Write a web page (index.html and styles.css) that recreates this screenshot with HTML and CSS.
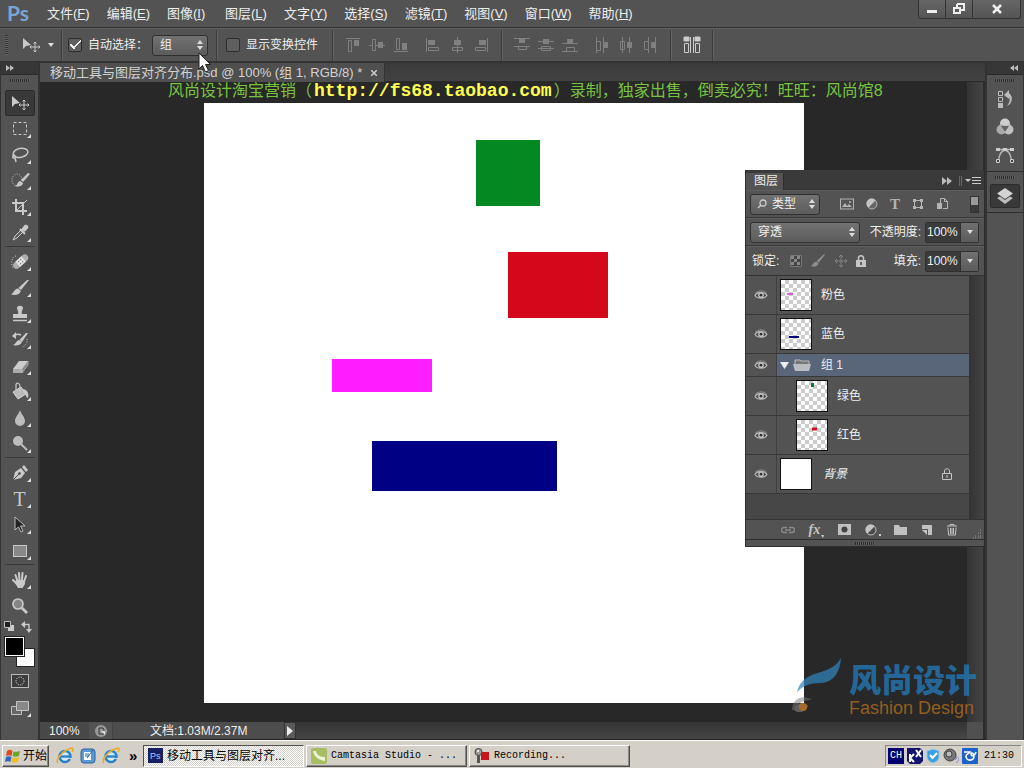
FILE: index.html
```html
<!DOCTYPE html>
<html lang="zh-CN">
<head>
<meta charset="utf-8">
<title>Photoshop</title>
<link rel="stylesheet" href="styles.css">
</head>
<body>
<svg class="sprite" aria-hidden="true">
  <symbol id="eye" viewBox="0 0 14 12"><path d="M1 6.500C3 2.500 11 2.500 13 6.500C11 10 3 10 1 6.500Z" fill="#484848" stroke="#b4b4b4" stroke-width="1.300"/><circle cx="7" cy="6.200" r="2.800" fill="#c4c4c4"/><circle cx="7" cy="6.200" r="1.400" fill="#333"/><path d="M1 4.500C4 1 10 1 13 4.500" fill="none" stroke="#8d8d8d"/></symbol>
  <symbol id="updown" viewBox="0 0 6 10"><path d="M0 4L3 0L6 4ZM0 6H6L3 10Z" fill="#ddd"/></symbol>
  <symbol id="down" viewBox="0 0 6 4"><path d="M0 0H6L3 4Z" fill="#ddd"/></symbol>
  <symbol id="move" viewBox="0 0 18 16"><path d="M1 1V12L4 9L9 8Z" fill="#c9c9c9"/><path d="M13 5V15M8 10H18M11.500 6.500L13 5L14.500 6.500M11.500 13.500L13 15L14.500 13.500M9.500 8.500L8 10L9.500 11.500M16.500 8.500L18 10L16.500 11.500" fill="none" stroke="#c9c9c9"/></symbol>
  <symbol id="brush" viewBox="0 0 20 20"><path d="M19 2L11 12L8.500 10L17 2Z" fill="#c9c9c9"/><path d="M8 10.500L10.800 12.800C10 17 5 17.500 1 16.500C4 15 4 11 8 10.500Z" fill="#c9c9c9"/></symbol>
  <symbol id="ie" viewBox="0 0 18 18"><circle cx="9" cy="9.500" r="5.500" fill="#d8ecf8" stroke="#2a83cf" stroke-width="2.600"/><path d="M4 9.500H15" stroke="#2a83cf" stroke-width="2.400"/><path d="M11 11H16V13Z" fill="#d4d0c8"/><path d="M2 16C-1 14 5 5 13 2C17 0 18 2 16 5" fill="none" stroke="#e8ae2c" stroke-width="1.700"/></symbol>
</svg>

<header class="menubar">
  <div class="brand">Ps</div>
  <nav class="menus">
    <button>文件(<u>F</u>)</button><button>编辑(<u>E</u>)</button><button>图像(<u>I</u>)</button><button>图层(<u>L</u>)</button><button>文字(<u>Y</u>)</button><button>选择(<u>S</u>)</button><button>滤镜(<u>T</u>)</button><button>视图(<u>V</u>)</button><button>窗口(<u>W</u>)</button><button>帮助(<u>H</u>)</button>
  </nav>
  <div class="winctl">
    <button aria-label="最小化"><svg width="12" height="12"><path d="M1 7H11V10H1Z" fill="#eee"/></svg></button>
    <button aria-label="还原"><svg width="14" height="12"><path d="M5 1H12V7H9M5 1V4M2 5H8V10H2Z" fill="none" stroke="#eee" stroke-width="2"/></svg></button>
    <button class="wide" aria-label="关闭"><svg width="12" height="10"><path d="M2 1L10 9M10 1L2 9" stroke="#eee" stroke-width="2.500"/></svg></button>
  </div>
</header>

<section class="options">
  <span class="vgrip"></span>
  <svg class="opt-move" width="18" height="16"><use href="#move"/></svg>
  <svg width="6" height="4"><use href="#down"/></svg>
  <i class="vsep tight"></i>
  <label class="check"><input type="checkbox" checked>自动选择：</label>
  <span class="select sel-group"><select aria-label="自动选择对象"><option>组</option></select><svg width="6" height="10"><use href="#updown"/></svg>
    <svg class="cursor" width="14" height="21" viewBox="0 0 14 21"><path d="M1 1V17L4.500 13.500L7.500 20L10.500 18.500L7.500 12.500H12.500Z" fill="#fff" stroke="#222"/></svg></span>
  <i class="vsep"></i>
  <label class="check"><input type="checkbox">显示变换控件</label>
  <i class="vsep after-check"></i>
  <div class="aligns">
    <svg width="16" height="16"><path d="M1 1.500H15M3.500 3.500H6.500V14.500H3.500Z"/><path class="f" d="M9 3H14V9H9Z"/></svg>
    <svg width="16" height="16"><path d="M0 8.500H3M3.500 2.500H6.500V13.500H3.500ZM7 8.500H16"/><path class="f" d="M9 5H14V11H9Z"/></svg>
    <svg width="16" height="16"><path d="M1 14.500H15M3.500 1.500H6.500V12.500H3.500Z"/><path class="f" d="M9 6H14V13H9Z"/></svg>
  </div>
  <div class="aligns">
    <svg width="16" height="16"><path d="M1.500 1V15M3.500 10.500H13.500V13.500H3.500Z"/><path class="f" d="M3 3H10V8H3Z"/></svg>
    <svg width="16" height="16"><path d="M8.500 0V16M3.500 10.500H13.500V13.500H3.500Z"/><path class="f" d="M5 3H12V8H5Z"/></svg>
    <svg width="16" height="16"><path d="M14.500 1V15M2.500 10.500H12.500V13.500H2.500Z"/><path class="f" d="M6 3H13V8H6Z"/></svg>
  </div>
  <i class="vsep"></i>
  <div class="aligns">
    <svg width="16" height="16"><path d="M0 1.500H16M0 9.500H16M4.500 9.500H12.500V12.500H4.500Z"/><path class="f" d="M5 2H11V6H5Z"/></svg>
    <svg width="16" height="16"><path d="M0 4.500H16M0 11.500H16M3.500 9.500H12.500V13.500H3.500Z"/><path class="f" d="M5 2H11V7H5Z"/></svg>
    <svg width="16" height="16"><path d="M0 6.500H16M0 14.500H16M4.500 10.500H12.500V14.500H4.500Z"/><path class="f" d="M5 2H11V6H5Z"/></svg>
  </div>
  <div class="aligns">
    <svg width="16" height="16"><path d="M2.500 0V16M9.500 0V16M2.500 4.500H6.500V13.500H2.500Z"/><path class="f" d="M10 5H14V11H10Z"/></svg>
    <svg width="16" height="16"><path d="M4.500 0V16M11.500 0V16M2.500 4.500H6.500V12.500H2.500Z"/><path class="f" d="M9 5H14V11H9Z"/></svg>
    <svg width="16" height="16"><path d="M6.500 0V16M13.500 0V16M2.500 4.500H6.500V12.500H2.500Z"/><path class="f" d="M9 5H13V11H9Z"/></svg>
  </div>
  <i class="vsep"></i>
  <div class="aligns lit">
    <svg width="18" height="18"><path class="f" d="M1 1H6V5H1ZM12 1H17V5H12Z"/><path d="M1.500 7.500H5.500V16.500H1.500ZM12.500 7.500H16.500V16.500H12.500ZM7.500 1V17M10.500 1V17"/></svg>
  </div>
  <i class="vsep"></i>
</section>

<main class="workspace">
  <aside class="toolbox">
    <div class="dockhead"><svg width="8" height="6"><path d="M0 0L4 3L0 6ZM4 0L8 3L4 6Z" fill="#bbb"/></svg></div>
    <i class="hgrip"></i>
    <div class="tools">
      <button class="active" aria-label="移动工具"><svg width="18" height="16"><use href="#move"/></svg></button>
      <button class="more" aria-label="选框"><svg width="20" height="20"><rect x="3.500" y="3.500" width="13" height="12" fill="none" stroke="#c9c9c9" stroke-dasharray="3 2"/></svg></button>
      <button class="more" aria-label="套索"><svg width="20" height="20" fill="none" stroke="#c9c9c9" stroke-width="1.500"><ellipse cx="10.500" cy="8" rx="7.500" ry="4.500" transform="rotate(-12 10 8)"/><path d="M5 10C2 10 2 14 5 13C7 12 5 10 3 11M5 13L6 17"/></svg></button>
      <button class="more" aria-label="快速选择"><svg width="20" height="20"><ellipse cx="7" cy="9" rx="5" ry="6" fill="none" stroke="#c9c9c9" stroke-dasharray="1 1.500"/><path d="M20 3L13 11L11 9L18 2Z" fill="#c9c9c9"/><path d="M10 10L13 12C12 16 8 16 5 15C8 14 7 11 10 10Z" fill="#c9c9c9"/></svg></button>
      <button class="more" aria-label="裁剪"><svg width="20" height="20"><path d="M6 2V14H17M2 6H13V18" fill="none" stroke="#c9c9c9" stroke-width="2"/><path d="M7 13L17 3" stroke="#c9c9c9"/></svg></button>
      <button class="more" aria-label="吸管"><svg width="20" height="20"><path d="M3 17L5 13L11 7L13 9L7 15Z" fill="#606060" stroke="#c9c9c9"/><path d="M10 6L15 11M12 7L15 3C17 2 18 4 17 5L14 8" stroke="#c9c9c9" stroke-width="2" fill="#c9c9c9"/></svg></button>
      <hr>
      <button class="more" aria-label="修复画笔"><svg width="20" height="20"><path d="M6 4C1 4 1 14 3 16" fill="none" stroke="#c9c9c9" stroke-dasharray="1 1.500"/><g transform="rotate(-42 11 10)"><rect x="2" y="6" width="18" height="7" rx="3.500" fill="#adadad"/><rect x="7" y="6" width="8" height="7" fill="#dedede"/><path d="M9 8H10M12 8H13M9 11H10M12 11H13" stroke="#666"/></g></svg></button>
      <button class="more" aria-label="画笔"><svg width="20" height="20"><use href="#brush"/></svg></button>
      <button class="more" aria-label="图章"><svg width="20" height="20"><path d="M8 10C9 7 7 6 7 4C7 1 13 1 13 4C13 6 11 7 12 10H17V14H3V10Z" fill="#c9c9c9"/><path d="M3 16.500H17" stroke="#c9c9c9" stroke-width="1.500"/></svg></button>
      <button class="more" aria-label="历史画笔"><svg width="20" height="20"><path d="M18 3L12 12L9.500 10L16 3Z" fill="#c9c9c9"/><path d="M9 10L12 12C10 16 6 16 3 15C6 14 6 11 9 10ZM2 6L6 2V9Z" fill="#c9c9c9"/><path d="M5 5C7 4 9 4 11 5" fill="none" stroke="#c9c9c9" stroke-width="1.500"/><path d="M17 9C18 13 15 16 12 17" fill="none" stroke="#c9c9c9" stroke-dasharray="1 1.500"/></svg></button>
      <button class="more" aria-label="橡皮擦"><svg width="20" height="20"><path d="M3 13L9 5H18L12 13Z" fill="#ccc"/><path d="M3 13H12V17H3Z" fill="#aaa"/><path d="M12 13L18 5V9L12 17Z" fill="#858585" stroke="#ccc" stroke-width=".6"/></svg></button>
      <button class="more" aria-label="油漆桶"><svg width="20" height="20"><path d="M3 10L11 5L16 12L8 17Z" fill="#bbb" stroke="#d4d4d4"/><path d="M6 9V3C6 0 10 1 10 4V9" fill="none" stroke="#c9c9c9" stroke-width="1.200"/><path d="M13 7C18 8 19 12 18 16C16 16 16 12 14 10Z" fill="#c9c9c9"/></svg></button>
      <button class="more" aria-label="模糊"><svg width="20" height="20"><path d="M10 2C11 6 15 9 15 13A5 5 0 0 1 5 13C5 9 9 6 10 2Z" fill="#bcbcbc"/></svg></button>
      <button class="more" aria-label="减淡"><svg width="20" height="20"><circle cx="8" cy="7" r="5" fill="#bcbcbc"/><path d="M11 10L17 16" stroke="#bcbcbc" stroke-width="2"/></svg></button>
      <hr>
      <button class="more" aria-label="钢笔"><svg width="20" height="20"><path d="M3 17L5 9L11 5L15 10L11 15Z" fill="#c9c9c9"/><path d="M3 17L9 11" stroke="#444"/><circle cx="9.500" cy="10.500" r="1.300" fill="#444"/><path d="M12 4L14 2L18 7L16 9Z" fill="#c9c9c9"/></svg></button>
      <button class="more type" aria-label="文字">T</button>
      <button class="more" aria-label="路径选择"><svg width="20" height="20"><path d="M5 2V15L8.500 12L11 17L13 16L10.500 11H15Z" fill="#222" stroke="#bbb"/></svg></button>
      <button class="more" aria-label="矩形"><svg width="20" height="20"><rect x="3.500" y="4.500" width="13" height="11" fill="#888" stroke="#c9c9c9"/></svg></button>
      <hr>
      <button class="more" aria-label="抓手"><svg width="20" height="20"><path d="M3 10L7 14M5.500 5L7.500 11M9 3L9.500 10M12.500 3L12 10M16 6L14 12" stroke="#c9c9c9" stroke-width="2" fill="none" stroke-linecap="round"/><path d="M6 10H15L15 14L12.500 18H8L5 13Z" fill="#c9c9c9"/></svg></button>
      <button aria-label="缩放"><svg width="20" height="20"><circle cx="8" cy="8" r="5" fill="#858585" stroke="#c9c9c9" stroke-width="1.700"/><path d="M12 12L17 17" stroke="#c9c9c9" stroke-width="2.800"/></svg></button>
    </div>
    <div class="swaprow">
      <svg width="11" height="11"><path d="M4 4H10V10H4Z" fill="#ccc"/><path d="M.5.500H6.500V6.500H.5Z" fill="#222" stroke="#bbb"/></svg>
      <svg width="12" height="12"><path d="M3 3.500H8V9" fill="none" stroke="#c9c9c9" stroke-width="1.300"/><path d="M0 3.500L4 0V7ZM5 8H11L8 12Z" fill="#c9c9c9"/></svg>
    </div>
    <div class="colors"><i class="bg"></i><i class="fg"></i></div>
    <button class="lone" aria-label="快速蒙版"><svg width="18" height="14"><rect x=".5" y=".5" width="17" height="13" fill="#3c3c3c" stroke="#bbb"/><circle cx="9" cy="7" r="4" fill="none" stroke="#ddd" stroke-dasharray="1.200 1.200"/></svg></button>
    <button class="lone more" aria-label="屏幕模式"><svg width="18" height="14"><path d="M.5 5.500H10.500V13.500H.5Z" fill="#666" stroke="#c4c4c4"/><path d="M5.500.500H17.500V9.500H5.500Z" fill="#888" stroke="#c4c4c4"/></svg></button>
  </aside>

  <section class="editor">
    <div class="tabs"><div class="tab">移动工具与图层对齐分布.psd @ 100% (组 1, RGB/8) *<button aria-label="关闭文档"><svg width="6" height="6"><path d="M0 0L6 6M6 0L0 6" stroke="#ccc" stroke-width="1.500"/></svg></button></div></div>
    <div class="stage">
      <div class="viewport">
        <p class="banner">风尚设计淘宝营销（<b>http://fs68.taobao.com</b>）录制，独家出售，倒卖必究！旺旺：风尚馆8</p>
        <div class="artboard">
          <i class="shape green"></i><i class="shape red"></i><i class="shape pink"></i><i class="shape blue"></i>
        </div>
      </div>
      <div class="vscroll"></div>
    </div>
    <div class="status">
      <span class="zoom">100%</span>
      <span class="sticon"><svg width="12" height="12"><circle cx="6" cy="6" r="6" fill="#999"/><path d="M4 3H8L9 5V9H4Z" fill="none" stroke="#333"/><path d="M6 6H10V10Z" fill="#ddd"/></svg></span>
      <span class="docinfo">文档:1.03M/2.37M</span>
      <button aria-label="状态菜单"><svg width="6" height="10"><path d="M0 0L6 5L0 10Z" fill="#eee"/></svg></button>
      <span class="hscroll"></span><span class="corner"></span>
    </div>

    <section class="layers">
      <div class="ptabs"><span class="ptab">图层</span><svg width="10" height="8"><path d="M0 0L5 4L0 8ZM5 0L10 4L5 8Z" fill="#bbb"/></svg><svg width="22" height="10"><path d="M.5 0V10M2.500 0V10" stroke="#666"/><path d="M6 3H12L9 6Z" fill="#ccc"/><path d="M13 1.500H22M13 4.500H22M13 7.500H22" stroke="#ccc"/></svg></div>
      <div class="prow filter">
        <span class="select sel-kind"><svg class="lens" width="10" height="10"><circle cx="6" cy="4" r="3" fill="none" stroke="#ccc" stroke-width="1.300"/><path d="M4 6L1 9" stroke="#ccc" stroke-width="1.500"/></svg><select aria-label="过滤类型"><option>类型</option></select><svg width="6" height="10"><use href="#updown"/></svg></span>
        <div class="ficons">
          <button aria-label="像素图层"><svg width="14" height="12"><rect x=".5" y="1" width="13" height="10" fill="#555" stroke="#b4b4b4"/><path d="M2 9L5 5L7 8L9 6L12 9Z" fill="#b4b4b4"/><circle cx="10" cy="4" r="1" fill="#b4b4b4"/></svg></button>
          <button aria-label="调整图层"><svg width="12" height="12"><circle cx="6" cy="6" r="5" fill="#666" stroke="#b4b4b4"/><path d="M9.500 2.500A5 5 0 1 0 2.500 9.500Z" fill="#c4c4c4"/></svg></button>
          <button class="tt" aria-label="文字图层">T</button>
          <button aria-label="形状图层"><svg width="12" height="12"><path d="M2.500 2.500H9.500V9.500H2.500Z" fill="none" stroke="#b4b4b4"/><path d="M1 1H4V4H1ZM8 1H11V4H8ZM1 8H4V11H1ZM8 8H11V11H8Z" fill="#b4b4b4"/></svg></button>
          <button aria-label="智能对象"><svg width="12" height="14"><path d="M4.500 7V1.500H8.500L11.500 4.500V11.500H7M8.500 1.500V4.500H11.500" fill="none" stroke="#b4b4b4"/><path d="M1 6H6V12H1Z" fill="#b4b4b4"/></svg></button>
        </div>
        <button class="toggle" aria-label="过滤开关"></button>
      </div>
      <div class="prow">
        <span class="select sel-blend"><select aria-label="混合模式"><option>穿透</option></select><svg width="6" height="10"><use href="#updown"/></svg></span>
        <label for="op">不透明度:</label><span class="num"><input id="op" value="100%"><button aria-label="不透明度滑块"><svg width="6" height="4"><use href="#down"/></svg></button></span>
      </div>
      <div class="prow lockrow">
        <span class="lk">锁定:</span>
        <div class="locks">
          <svg width="12" height="12"><path d="M.5.500H11.500V11.500H.5Z" fill="#444" stroke="#777"/><path d="M1 1H4V4H1ZM7 1H10V4H7ZM4 4H7V7H4ZM1 7H4V10H1ZM7 7H10V10H7Z" fill="#888"/></svg>
          <svg class="dim" width="16" height="16"><use href="#brush"/></svg>
          <svg width="14" height="14"><path d="M7 1V13M1 7H13M5 3L7 1L9 3M5 11L7 13L9 11M3 5L1 7L3 9M11 5L13 7L11 9" fill="none" stroke="#858585"/></svg>
          <svg width="10" height="12"><path d="M2.500 6V3C2.500 0 7.500 0 7.500 3V6" fill="none" stroke="#c4c4c4" stroke-width="1.500"/><path d="M0 5H10V12H0Z" fill="#c4c4c4"/><path d="M5 7V10" stroke="#444" stroke-width="1.500"/></svg>
        </div>
        <label for="fill">填充:</label><span class="num"><input id="fill" value="100%"><button aria-label="填充滑块"><svg width="6" height="4"><use href="#down"/></svg></button></span>
      </div>
      <div class="listwrap">
        <ul class="list">
          <li><button class="eye" aria-label="可见"><svg width="14" height="12"><use href="#eye"/></svg></button><svg class="thumb" width="30" height="30"><path d="M6 14H12" stroke="#e060d8" stroke-width="2"/></svg><span>粉色</span></li>
          <li><button class="eye" aria-label="可见"><svg width="14" height="12"><use href="#eye"/></svg></button><svg class="thumb" width="30" height="30"><path d="M8 18H18" stroke="#00007f" stroke-width="2"/></svg><span>蓝色</span></li>
          <li class="group"><button class="eye" aria-label="可见"><svg width="14" height="12"><use href="#eye"/></svg></button><svg class="twist" width="10" height="7"><path d="M0 0H9L4.500 7Z" fill="#eee"/></svg><svg width="18" height="13"><path d="M2 5V1H7L8 2H16V5" fill="#777" stroke="#b9bec5"/><path d="M0 5H18L16 12H2Z" fill="#b9bec5"/></svg><span>组 1</span></li>
          <li class="child"><button class="eye" aria-label="可见"><svg width="14" height="12"><use href="#eye"/></svg></button><svg class="thumb" width="30" height="30"><path d="M14 4H17" stroke="#0a7a2c" stroke-width="4"/></svg><span>绿色</span></li>
          <li class="child"><button class="eye" aria-label="可见"><svg width="14" height="12"><use href="#eye"/></svg></button><svg class="thumb" width="30" height="30"><path d="M15 9H20" stroke="#c41224" stroke-width="3"/></svg><span>红色</span></li>
          <li><button class="eye" aria-label="可见"><svg width="14" height="12"><use href="#eye"/></svg></button><svg class="thumb plain" width="30" height="30"></svg><span class="it">背景</span><svg class="lock" width="10" height="12"><path d="M2.500 5V3C2.500 0 7.500 0 7.500 3V5M.5 5.500H9.500V11.500H.5ZM5 7V10" fill="none" stroke="#c4c4c4"/></svg></li>
        </ul>
        <div class="pscroll"></div>
      </div>
      <div class="pfoot">
        <button aria-label="链接图层"><svg width="14" height="10"><path d="M6 2.500H3A2.500 2.500 0 0 0 3 7.500H6M8 2.500H11A2.500 2.500 0 0 1 11 7.500H8M4 5H10" fill="none" stroke="#888" stroke-width="1.400"/></svg></button>
        <button class="fx" aria-label="图层样式">fx<svg width="3" height="3"><path d="M0 0H3L2 3Z" fill="#ccc"/></svg></button>
        <button aria-label="图层蒙版"><svg width="13" height="11"><path d="M0 0H13V11H0Z" fill="#c0c0c0"/><circle cx="6.500" cy="5.500" r="3" fill="#444"/></svg></button>
        <button aria-label="新建调整图层"><svg width="16" height="12"><circle cx="6" cy="6" r="5" fill="#4a4a4a" stroke="#c0c0c0"/><path d="M9.500 2.500A5 5 0 1 0 2.500 9.500Z" fill="#c4c4c4"/><path d="M14 10H16V12H14Z" fill="#ccc"/></svg></button>
        <button aria-label="新建组"><svg width="13" height="11"><path d="M0 1H5L6 3H13V11H0Z" fill="#c0c0c0"/></svg></button>
        <button aria-label="新建图层"><svg width="12" height="12"><path d="M1 1H11V11H7V5H1Z" fill="#c0c0c0"/><path d="M1 6H6V11Z" fill="#c0c0c0"/></svg></button>
        <button aria-label="删除图层"><svg width="12" height="13"><path d="M1 3H11M4 3V1.500H8V3M2 4.500L2.500 12H9.500L10 4.500M4.500 5V11M6 5V11M7.500 5V11" fill="none" stroke="#c0c0c0"/></svg></button>
        <svg class="resize" width="10" height="10"><path d="M8 1H9M6 4H7M8 4H9M3 7H4M6 7H7M8 7H9M1 9H2M3 9H4M6 9H7M8 9H9" stroke="#999"/></svg>
      </div>
      <div class="pgrip"><i class="hgrip"></i></div>
    </section>

    <div class="watermark">
      <svg width="54" height="60" viewBox="0 0 54 60"><path d="M5 34C8 21 18 17 29 14C39 11 45 7 49 0C48 14 42 24 29 25C17 25 11 28 5 34Z" fill="#2f86bd"/><path d="M0 52C0 40 12 36 20 42C12 42 6 44 2 52Z" fill="#777" opacity=".7"/><path d="M2 52C4 44 14 44 16 48C14 54 6 56 2 52Z" fill="#a9a9a9" opacity=".6"/><circle cx="11" cy="49" r="4" fill="#d9842c"/></svg>
      <div class="wtext"><strong>风尚设计</strong><span>Fashion Design</span></div>
    </div>
  </section>

  <aside class="dock">
    <div class="dockhead"><svg width="8" height="6"><path d="M8 0L4 3L8 6ZM4 0L0 3L4 6Z" fill="#bbb"/></svg></div>
    <div class="dgroup">
      <i class="hgrip"></i>
      <button aria-label="历史记录"><svg width="18" height="18"><path d="M2.500 1.500H6.500V5.500H2.500ZM2.500 7.500H6.500V11.500H2.500Z" fill="none" stroke="#bbb"/><path d="M2 13H7V18H2Z" fill="#bbb"/><path d="M8 5L13 0V3C18 7 16 14 11 16C14 12 14 9 13 7V9Z" fill="#bbb"/></svg></button>
      <button aria-label="通道"><svg width="20" height="20"><circle cx="10" cy="6.500" r="5" fill="#cfcfcf"/><circle cx="6.500" cy="12.500" r="5" fill="#aaa"/><circle cx="13.500" cy="12.500" r="5" fill="#bfbfbf"/><path d="M6 9H14L10 15Z" fill="#666"/></svg></button>
      <button aria-label="路径"><svg width="20" height="18"><path d="M1 3.500H19M3.500 15C4 9 6 5 10 4C14 5 16 9 16.500 15" fill="none" stroke="#bbb" stroke-width="1.300"/><path d="M1 2H5V5H1ZM8 2H12V5H8ZM15 2H19V5H15Z" fill="#ccc"/><path d="M1.500 13.500H4.500V16.500H1.500ZM15.500 13.500H18.500V16.500H15.500Z" fill="#444" stroke="#ccc"/></svg></button>
    </div>
    <div class="dgroup">
      <i class="hgrip"></i>
      <button class="on" aria-label="图层"><svg width="18" height="18"><path d="M9 1L17 6.500L9 12L1 6.500Z" fill="#d4d4d4"/><path d="M1 11L4 9.500L9 13L14 9.500L17 11L9 17Z" fill="#bdbdbd"/></svg></button>
    </div>
  </aside>
</main>

<footer class="taskbar">
  <button class="start"><svg width="18" height="18"><path d="M3 4C5 2 7 3 8.500 4L7.500 9C6 8 4 8 2 9Z" fill="#dc4b20"/><path d="M9.500 4.500C11 5 13 5 16 4L15 9C12 10 10 10 8.500 9Z" fill="#6aa82c"/><path d="M2 10C4 9 6 9 7.500 10L6.500 15C5 14 3 14 1 15Z" fill="#2f68c6"/><path d="M8.500 10.500C10 11 12 11 15 10L14 15C11 16 9 16 7.500 15Z" fill="#efbd25"/></svg>开始</button>
  <div class="quick">
    <button aria-label="Internet Explorer"><svg width="18" height="18"><use href="#ie"/></svg></button>
    <button aria-label="显示桌面"><svg width="18" height="18"><rect x="2" y="2" width="14" height="14" rx="3" fill="#5a9ad4" stroke="#2a62a0"/><path d="M5 5H12V13H5Z" fill="#fff"/><path d="M6 7H10M6 9H10M14 3L8 11" stroke="#2a62a0"/></svg></button>
    <button aria-label="浏览器"><svg width="18" height="18"><use href="#ie"/></svg></button>
  </div>
  <span class="chev">»</span>
  <button class="task pressed"><svg width="15" height="15"><path d="M0 0H15V15H0Z" fill="#16205f"/><text x="2" y="11" class="pstext">Ps</text></svg>移动工具与图层对齐...</button>
  <button class="task mono"><svg width="16" height="16"><rect width="16" height="16" rx="2" fill="#a6bd62"/><path d="M2 3C3 9 8 12 14 13V9C9 9 6 7 5 3Z" fill="#eef3d0"/></svg>Camtasia Studio - ...</button>
  <button class="task mono"><svg width="16" height="16"><path d="M7 4H15V12H7Z" fill="#c8141c"/><circle cx="4.500" cy="4" r="3.500" fill="#999" stroke="#444"/><path d="M3 7H6V15H3Z" fill="#555"/><circle cx="4" cy="3" r="1" fill="#fff"/></svg>Recording...</button>
  <div class="tray">
    <span class="ime">CH</span>
    <svg width="16" height="16"><path d="M0 0H13L16 3V13L13 16H3L0 13Z" fill="#14146e"/><path d="M3 6V14M7 6L3 10L7 14M9 2L14 9M14 2L9 9" stroke="#fff" stroke-width="2" fill="none"/></svg>
    <svg width="14" height="16"><path d="M7 1L13 3V8C13 12 10 14 7 15C4 14 1 12 1 8V3Z" fill="#3a9fe0" stroke="#8fc6ea"/><path d="M4 7L6.500 10L11 5" fill="none" stroke="#fff" stroke-width="2"/></svg>
    <svg width="16" height="16"><circle cx="7" cy="7" r="6" fill="#777" stroke="#444"/><circle cx="6" cy="6" r="3" fill="#bbb" stroke="#444"/><path d="M12 12C14 11 14 9 14 8M13 15C16 13 16 11 16 9" fill="none" stroke="#8f8fc8"/></svg>
    <svg width="16" height="16"><rect width="16" height="16" rx="1" fill="#1c62c8"/><path d="M2 4H8C7 6 4 6 4 8C4 14 12 13 12 8C12 5 9 4 9 6C9 9 13 8 14 4" fill="none" stroke="#fff" stroke-width="1.600"/></svg>
    <time>21:30</time>
  </div>
</footer>
</body>
</html>
```
FILE: styles.css
```css
* { box-sizing: border-box; }
body { margin: 0; min-height: 100vh; display: grid; grid-template-rows: 28px 34px 1fr 28px; background: #535353; color: #eee; font: 12px/16px "Liberation Sans", "Noto Sans CJK SC", sans-serif; overflow: hidden; white-space: nowrap; }
button, input, select { font: inherit; color: inherit; margin: 0; padding: 0; border: 0; background: none; }
svg { display: block; flex: none; }
i { display: block; }
.sprite { position: absolute; width: 0; height: 0; }

.menubar { display: flex; align-items: flex-start; border-bottom: 1px solid #333; }
.brand { width: 47px; padding-left: 7px; color: #7aa5d3; font: bold 21px/25px Lato, sans-serif; }
.menus { display: flex; gap: 17px; flex: 1; padding-top: 5px; }
.menus button { min-width: 41px; font-size: 13px; line-height: 18px; text-align: left; }
.winctl { display: flex; margin-right: 3px; border: 1px solid #333; border-top: 0; border-radius: 0 0 3px 3px; background: linear-gradient(#666, #555); }
.winctl button { width: 27px; height: 18px; display: grid; place-items: center; border-right: 1px solid #333; }
.winctl .wide { width: 47px; border-right: 0; }

.options { display: flex; align-items: center; border-top: 1px solid #626262; border-bottom: 1px solid #333; padding-left: 5px; }
.vgrip { width: 3px; height: 20px; background: repeating-linear-gradient(#333 0 1px, #666 1px 2px); }
.opt-move { margin: 0 8px 0 14px; }
.vsep { width: 2px; height: 31px; background: #3c3c3c; border-right: 1px solid #636363; margin: 0 8px; flex: none; }
.tight { margin: 0 5px 0 7px; }
.check { display: flex; align-items: center; gap: 6px; }
.check input { appearance: none; width: 14px; height: 14px; background: #5f5f5f; border: 1px solid #2d2d2d; border-radius: 2px; }
.check input:checked { background: linear-gradient(135deg, transparent 43%, #eee 43% 58%, transparent 58%) 4px 1px / 8px 9px no-repeat, linear-gradient(45deg, transparent 38%, #eee 38% 64%, transparent 64%) 1px 5px / 5px 5px no-repeat, #5f5f5f; }
.select { position: relative; display: flex; align-items: center; height: 21px; padding: 0 4px 0 7px; border: 1px solid #303030; border-radius: 3px; background: linear-gradient(#727272, #5c5c5c); flex: none; }
.select select { appearance: none; flex: 1; min-width: 0; outline: 0; line-height: 18px; }
.sel-group { width: 56px; margin-left: 4px; }
.cursor { position: absolute; left: 45px; top: 16px; z-index: 5; }
.after-check { margin-left: 14px; }
.aligns { display: flex; gap: 8px; margin: 0 4px 0 3px; }
.aligns + .aligns { margin-left: 12px; }
.aligns path { fill: none; stroke: #808080; }
.aligns .f { fill: #808080; stroke: none; }
.aligns.lit path { stroke: #ccc; }
.aligns.lit .f { fill: #ccc; }
.aligns.lit { margin: 0 3px; }

.workspace { display: flex; min-height: 0; }
.toolbox { width: 40px; flex: none; display: flex; flex-direction: column; align-items: center; border-left: 1px solid #333; border-right: 2px solid #333; }
.dockhead { align-self: stretch; height: 13px; padding: 3px 5px; background: #373737; border-bottom: 1px solid #2a2a2a; flex: none; }
.hgrip { width: 20px; height: 3px; margin-top: 4px; background: repeating-linear-gradient(90deg, #2d2d2d 0 1px, #5d5d5d 1px 2px); flex: none; }
.tools { padding-top: 8px; display: flex; flex-direction: column; align-items: center; }
.tools button, .lone { position: relative; width: 30px; height: 26px; display: grid; place-items: center; flex: none; }
.tools .active { background: #393939; border: 1px solid #2b2b2b; border-radius: 2px; }
.more::after { content: ""; position: absolute; right: 4px; bottom: 4px; border: 2px solid; border-color: transparent #ddd #ddd transparent; }
.tools hr { width: 30px; height: 3px; margin: 0; border: 0; border-top: 1px solid #383838; }
.tools .type { font: 20px/24px "Liberation Serif", serif; color: #c9c9c9; }
.swaprow { align-self: stretch; display: flex; justify-content: space-between; padding: 2px 5px 2px 3px; height: 18px; }
.colors { display: grid; width: 30px; height: 30px; }
.colors i { grid-area: 1 / 1; width: 19px; height: 19px; border: 1px solid #222; }
.colors .bg { background: #fff; place-self: end; }
.colors .fg { background: #000; border: 1px solid #fff; outline: 1px solid #222; }
.lone { margin-top: 1px; }

.editor { position: relative; flex: 1; min-width: 0; display: flex; flex-direction: column; background: #282828; }
.tabs { height: 20px; flex: none; background: linear-gradient(#3a3a3a, #424242); border-top: 1px solid #333; border-bottom: 1px solid #2a2a2a; }
.tab { display: inline-flex; align-items: center; height: 19px; padding: 1px 7px 0 10px; gap: 9px; background: #4f4f4f; border-right: 1px solid #333; color: #d2d2d2; font-size: 13px; }
.stage { flex: 1; display: flex; min-height: 0; }
.viewport { flex: 1; min-width: 0; }
.banner { margin: 0; height: 21px; padding-left: 128px; color: #78c440; font-size: 16px; line-height: 18px; }
.banner b { margin: 0 2px; color: #ffff50; font: bold 18px/18px "Liberation Mono", monospace; }
.artboard { position: relative; width: 600px; height: 600px; margin: 0 auto; background: #fff; }
.shape { position: absolute; }
.green { left: 272px; top: 37px; width: 64px; height: 66px; background: #048822; }
.red { left: 304px; top: 149px; width: 100px; height: 66px; background: #d5071a; }
.pink { left: 128px; top: 256px; width: 100px; height: 33px; background: #ff1eff; }
.blue { left: 168px; top: 338px; width: 185px; height: 50px; background: #000085; }
.vscroll { width: 18px; border-right: 2px solid #2c2c2c; background: linear-gradient(90deg, #343434, #444); }
.status { height: 18px; flex: none; display: flex; align-items: stretch; line-height: 18px; background: #3d3d3d; border-bottom: 1px solid #222; }
.zoom { width: 49px; padding-left: 9px; background: #484848; }
.sticon { width: 24px; display: grid; place-items: center; background: #535353; border-right: 1px solid #444; }
.docinfo { width: 171px; padding-left: 37px; background: #4d4d4d; }
.status button { width: 12px; display: grid; place-items: center; background: #5a5a5a; border: 1px solid #333; }
.hscroll { flex: 1; background: linear-gradient(#343434, #464646); }
.corner { width: 18px; background: #505050; border-right: 2px solid #2c2c2c; }

.layers { position: absolute; right: 1px; top: 108px; width: 239px; display: flex; flex-direction: column; background: #535353; border: 1px solid #2d2d2d; border-width: 0 0 1px 1px; }
.ptabs { height: 20px; display: flex; align-items: center; gap: 7px; padding: 3px 3px 0 0; background: #3a3a3a; border-bottom: 1px solid #333; }
.ptab { height: 17px; margin-right: auto; padding: 0 5px 0 8px; background: #535353; border-right: 1px solid #2d2d2d; }
.prow { display: flex; align-items: center; height: 28px; padding: 0 5px 0 4px; border-bottom: 1px solid #393939; border-top: 1px solid #5e5e5e; }
.sel-kind { width: 70px; gap: 5px; padding-left: 6px; }
.ficons { flex: 1; display: flex; justify-content: space-between; align-items: center; padding: 0 22px 0 20px; }
.tt { font: bold 15px/16px "Liberation Serif", serif; color: #b4b4b4; }
.toggle { width: 9px; height: 17px; background: linear-gradient(#999 0 50%, #3a3a3a 50%); border: 1px solid #333; }
.sel-blend { width: 110px; }
.prow label { margin-left: auto; }
.num { display: flex; margin-left: 4px; height: 21px; border: 1px solid #303030; border-radius: 2px; flex: none; }
.num input { width: 34px; padding-left: 1px; background: #3b3b3b; }
.num button { width: 18px; display: grid; place-items: center; background: linear-gradient(#707070, #5c5c5c); border-left: 1px solid #303030; }
.lockrow { height: 30px; border-bottom: 1px solid #333; padding-left: 6px; }
.locks { display: flex; align-items: center; gap: 8px; }
.lk { width: 38px; }
.dim { opacity: .5; }
.listwrap { display: flex; height: 244px; background: #474747; border-bottom: 1px solid #333; }
.list { list-style: none; margin: 0; padding: 0; flex: 1; }
.list li { display: flex; align-items: center; height: 39px; border-bottom: 1px solid #383838; background: #535353; }
.eye { width: 31px; align-self: stretch; display: grid; place-items: center; border-right: 1px solid #404040; margin-right: 3px; flex: none; background: #535353; }
.thumb { box-sizing: content-box; border: 1px solid #111; margin-right: 9px; background: repeating-conic-gradient(#ccc 0 25%, #fff 0 50%) 0 0 / 8px 8px; }
.plain { background: #fff; }
.child .thumb { margin-left: 16px; }
.list .group { height: 23px; background: #596679; }
.list .group .eye { background: #535353; }
.twist { margin-right: 3px; }
.group span { margin-left: 10px; }
.it { font-style: italic; margin-left: 2px; }
.lock { margin: 0 17px 0 auto; }
.pscroll { width: 15px; background: linear-gradient(90deg, #333, #444); }
.pfoot { display: flex; align-items: center; justify-content: space-between; height: 19px; padding: 0 2px 0 35px; }
.pfoot button { display: grid; place-items: center; }
.pfoot .fx { display: flex; align-items: flex-end; gap: 1px; font: italic bold 14px/16px "Liberation Serif", serif; color: #c4c4c4; }
.resize { align-self: end; }
.pgrip { height: 7px; border-top: 1px solid #2d2d2d; display: grid; justify-content: center; }
.pgrip .hgrip { margin-top: 2px; }

.watermark { position: absolute; right: 8px; bottom: 22px; display: flex; gap: 3px; opacity: .72; }
.wtext { display: flex; flex-direction: column; }
.wtext strong { font: 900 32px/40px "Noto Sans CJK SC", sans-serif; color: #237fc1; }
.wtext span { font: 18px/20px "Liberation Sans", sans-serif; color: #bb741e; }

.dock { width: 39px; flex: none; border-left: 2px solid #333; border-right: 1px solid #333; }
.dock .dockhead { display: flex; justify-content: flex-end; }
.dgroup { display: flex; flex-direction: column; align-items: center; padding-bottom: 4px; border-bottom: 1px solid #2d2d2d; }
.dgroup button { width: 30px; height: 24px; margin-top: 4px; display: grid; place-items: center; }
.dgroup .hgrip + button { margin-top: 5px; }
.dgroup .on { background: #393939; border: 1px solid #2b2b2b; border-radius: 2px; }

.taskbar { display: flex; align-items: center; padding: 2px 2px 0 2px; background: #d4d0c8; border-top: 1px solid #fff; color: #000; }
.start, .task { display: flex; align-items: center; height: 22px; border: 1px solid; border-color: #fff #505050 #505050 #fff; box-shadow: inset -1px -1px #888; }
.start { width: 47px; padding-left: 1px; gap: 1px; flex: none; }
.quick { display: flex; gap: 5px; margin-left: 7px; }
.chev { width: 14px; margin-left: 9px; font: bold 15px/16px "Liberation Sans", sans-serif; }
.task { width: 161px; padding-left: 4px; gap: 4px; margin-right: 2px; text-align: left; }
.pressed { background: repeating-conic-gradient(#fff 0 25%, #d4d0c8 0 50%) 0 0 / 2px 2px; border-color: #505050 #fff #fff #505050; box-shadow: none; }
.mono, .tray time, .ime { font-family: "Liberation Mono", monospace; font-size: 10px; }
.pstext { font: 9px "Liberation Sans", sans-serif; fill: #a5c8ff; }
.tray { display: flex; align-items: center; gap: 3px; height: 22px; margin-left: auto; padding: 0 7px 0 2px; border: 1px solid; border-color: #888 #fff #fff #888; }
.ime { width: 16px; background: #00006e; color: #fff; text-align: center; }
.tray time { margin-left: 3px; }
```
